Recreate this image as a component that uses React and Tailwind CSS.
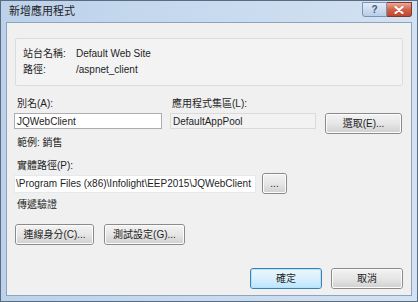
import React from 'react';

const font = "font-['Liberation_Sans','Noto_Sans_CJK_TC',sans-serif]";

function WinButton({ children, className = '', isDefault = false }) {
    return (
        <div
            className={`flex items-center justify-center rounded-[3px] border ${
                isDefault ? 'border-[#3c7fb1]' : 'border-[#8a8a8a]'
            } ${className}`}
        >
            <div
                className={`flex h-full w-full items-center justify-center rounded-[2px] border ${
                    isDefault
                        ? 'border-[#b5e3f9] bg-gradient-to-b from-[#eaf6fd] via-[#d9f0fc] to-[#bee6fd]'
                        : 'border-[#fcfcfc] bg-gradient-to-b from-[#f2f2f2] via-[#e6e6e6] to-[#d2d2d2]'
                } text-[10px] text-[#1e1e1e]`}
            >
                {children}
            </div>
        </div>
    );
}

export default function App() {
    return (
        <div className={`flex h-[302px] w-[418px] flex-col border border-[#5b6b80] bg-gradient-to-r from-[#bcd2eb] to-[#d3e2f2] px-[5px] pb-[5px] ${font}`}>
            {/* title bar */}
            <div className="flex h-[21px] shrink-0 items-start justify-between">
                <div className="pl-[3px] pt-[3px] text-[11px] leading-[14px] text-[#1e1e1e]">新增應用程式</div>
                <div className="flex pt-[1px]">
                    <div className="flex h-[15px] w-[25px] items-center justify-center rounded-bl-[3px] border border-[#7a93b3] bg-gradient-to-b from-[#e3ecf7] to-[#b9cde6] text-[10px] font-bold leading-none text-[#3d5a80]">
                        ?
                    </div>
                    <div className="flex h-[15px] w-[25px] items-center justify-center rounded-br-[3px] border border-l-0 border-[#7a3b2e] bg-gradient-to-b from-[#e9a99a] via-[#d0624a] to-[#c2452c]">
                        <svg width="10" height="8" viewBox="0 0 10 8">
                            <path d="M1.5 1 L8.5 7 M8.5 1 L1.5 7" stroke="#fff" strokeWidth="2" strokeLinecap="round" />
                        </svg>
                    </div>
                </div>
            </div>

            {/* client area */}
            <div className="flex flex-1 flex-col border border-[#8ea4be] bg-[#f0f0f0] px-[7px] text-[10px] text-[#1e1e1e]">
                {/* site info */}
                <div className="ml-[1px] mt-[15px] h-[48px] w-[388px] rounded-[2px] border border-[#dcdcdc] bg-[#f3f3f3] pl-[7px] pt-[7px] leading-[16px]">
                    <div className="flex">
                        <span className="w-[53px]">站台名稱:</span>
                        <span>Default Web Site</span>
                    </div>
                    <div className="flex">
                        <span className="w-[53px]">路徑:</span>
                        <span>/aspnet_client</span>
                    </div>
                </div>

                {/* alias + pool */}
                <div className="mt-[11px] flex leading-[14px]">
                    <span className="w-[156px] pl-[3px]">別名(A):</span>
                    <span className="pl-[2px]">應用程式集區(L):</span>
                </div>
                <div className="mt-[2px] flex h-[20px] items-start">
                    <div className="flex h-[16px] w-[148px] items-center border border-[#abadb3] bg-white pl-[2px]">JQWebClient</div>
                    <div className="ml-[8px] flex h-[16px] w-[146px] items-center border border-[#dadada] bg-[#f2f2f2] pl-[2px]">
                        DefaultAppPool
                    </div>
                    <WinButton className="ml-[9px] h-[21px] w-[77px]">選取(E)...</WinButton>
                </div>

                <div className="mt-[3px] pl-[3px] leading-[14px]">範例: 銷售</div>

                {/* physical path */}
                <div className="mt-[9px] pl-[3px] leading-[14px]">實體路徑(P):</div>
                <div className="flex h-[21px] items-center">
                    <div className="flex h-[18px] w-[242px] items-center overflow-hidden whitespace-nowrap border border-[#e3e9ef] bg-white pl-[1px]">
                        \Program Files (x86)\Infolight\EEP2015\JQWebClient
                    </div>
                    <WinButton className="ml-[6px] h-[21px] w-[25px]">...</WinButton>
                </div>

                <div className="mt-[4px] pl-[3px] leading-[14px]">傳遞驗證</div>

                <div className="mt-[12px] flex">
                    <WinButton className="ml-[1px] h-[21px] w-[79px]">連線身分(C)...</WinButton>
                    <WinButton className="ml-[10px] h-[21px] w-[81px]">測試設定(G)...</WinButton>
                </div>

                <div className="mt-[23px] flex justify-end pr-[1px]">
                    <WinButton isDefault className="h-[21px] w-[72px]">確定</WinButton>
                    <WinButton className="ml-[9px] h-[21px] w-[72px]">取消</WinButton>
                </div>
            </div>
        </div>
    );
}
